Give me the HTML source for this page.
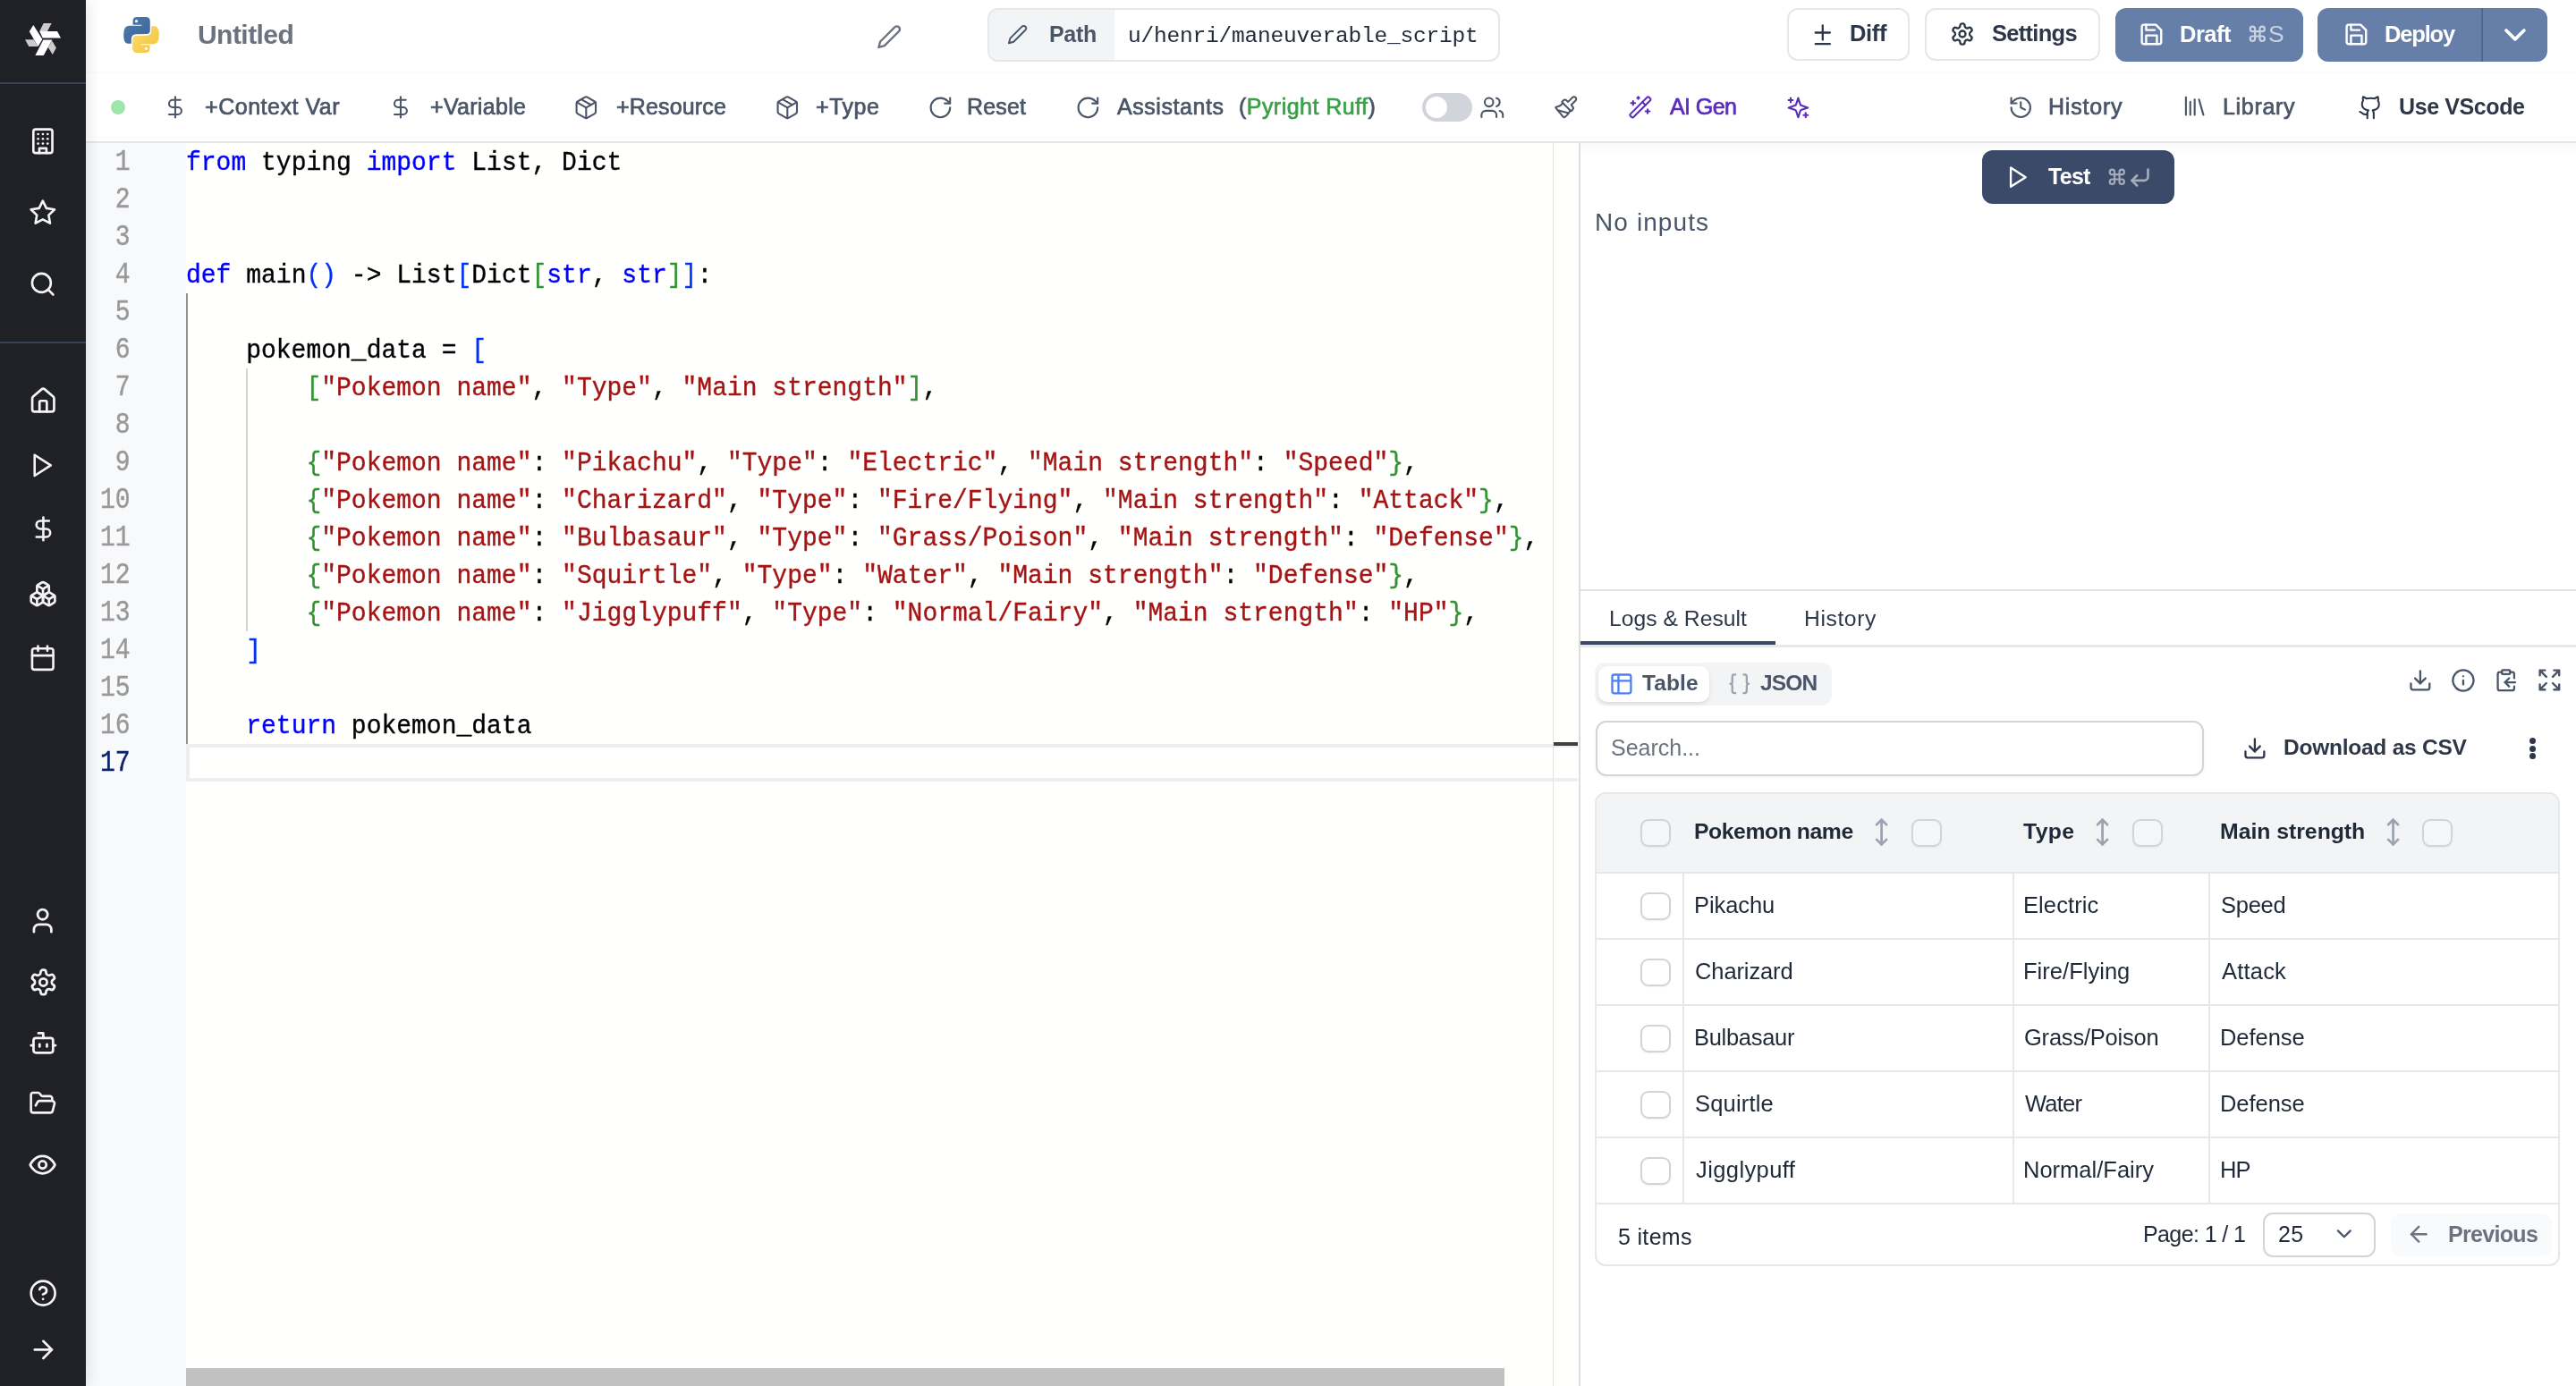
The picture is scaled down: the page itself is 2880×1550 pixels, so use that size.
<!DOCTYPE html>
<html><head><meta charset="utf-8"><title>Windmill</title>
<style>
html,body{margin:0;padding:0;}
body{width:2880px;height:1550px;overflow:hidden;position:relative;background:#ffffff;font-family:"Liberation Sans",sans-serif;}
.a{position:absolute;box-sizing:border-box;}
.t{position:absolute;white-space:pre;will-change:transform;}
.cl{height:42px;white-space:pre;transform:scaleY(1.05);transform-origin:0 28.5px;-webkit-text-stroke:0.35px currentColor;}
.ln{height:42px;text-align:right;transform:scaleY(1.18);transform-origin:0 28.5px;-webkit-text-stroke:0.4px currentColor;}
</style></head><body>
<!-- main backgrounds -->
<div class="a" style="left:96px;top:0;width:2784px;height:158px;background:#ffffff"></div>
<div class="a" style="left:96px;top:80px;width:2784px;height:2px;background:#fcfcfc"></div>
<div class="a" style="left:96px;top:158px;width:2784px;height:2px;background:#e4e6ea"></div>
<!-- editor -->
<div class="a" style="left:96px;top:160px;width:112px;height:1390px;background:#f8f9fb"></div>
<div class="a" style="left:208px;top:160px;width:1557px;height:1390px;background:#fffffe"></div>
<div class="a" style="will-change:transform;left:96px;top:161.5px;width:49.5px;font-family:'Liberation Mono',monospace;font-size:28px;line-height:42px;color:#999999">
<div class="ln">1</div>
<div class="ln">2</div>
<div class="ln">3</div>
<div class="ln">4</div>
<div class="ln">5</div>
<div class="ln">6</div>
<div class="ln">7</div>
<div class="ln">8</div>
<div class="ln">9</div>
<div class="ln">10</div>
<div class="ln">11</div>
<div class="ln">12</div>
<div class="ln">13</div>
<div class="ln">14</div>
<div class="ln">15</div>
<div class="ln">16</div>
<div class="ln" style="color:#0b216f">17</div>
</div>
<div class="a" style="left:208px;top:832px;width:1556px;height:42px;border:4px solid #eeeeee;border-right:none"></div>
<div class="a" style="left:208px;top:328px;width:2px;height:504px;background:#939393"></div>
<div class="a" style="left:275px;top:412px;width:2px;height:294px;background:#d3d3d3"></div>
<div class="a" style="will-change:transform;left:208px;top:161.5px;width:1528px;font-family:'Liberation Mono',monospace;font-size:28px;line-height:42px;color:#000000">
<div class="cl"><span style="color:#0000ff">from</span> typing <span style="color:#0000ff">import</span> List, Dict</div>
<div class="cl">&nbsp;</div>
<div class="cl">&nbsp;</div>
<div class="cl"><span style="color:#0000ff">def</span> main<span style="color:#0431fa">()</span> -&gt; List<span style="color:#0431fa">[</span>Dict<span style="color:#319331">[</span><span style="color:#0000ff">str</span>, <span style="color:#0000ff">str</span><span style="color:#319331">]</span><span style="color:#0431fa">]</span>:</div>
<div class="cl">&nbsp;</div>
<div class="cl">    pokemon_data = <span style="color:#0431fa">[</span></div>
<div class="cl">        <span style="color:#319331">[</span><span style="color:#a31515">&quot;Pokemon name&quot;</span>, <span style="color:#a31515">&quot;Type&quot;</span>, <span style="color:#a31515">&quot;Main strength&quot;</span><span style="color:#319331">]</span>,</div>
<div class="cl">&nbsp;</div>
<div class="cl">        <span style="color:#319331">{</span><span style="color:#a31515">&quot;Pokemon name&quot;</span>: <span style="color:#a31515">&quot;Pikachu&quot;</span>, <span style="color:#a31515">&quot;Type&quot;</span>: <span style="color:#a31515">&quot;Electric&quot;</span>, <span style="color:#a31515">&quot;Main strength&quot;</span>: <span style="color:#a31515">&quot;Speed&quot;</span><span style="color:#319331">}</span>,</div>
<div class="cl">        <span style="color:#319331">{</span><span style="color:#a31515">&quot;Pokemon name&quot;</span>: <span style="color:#a31515">&quot;Charizard&quot;</span>, <span style="color:#a31515">&quot;Type&quot;</span>: <span style="color:#a31515">&quot;Fire/Flying&quot;</span>, <span style="color:#a31515">&quot;Main strength&quot;</span>: <span style="color:#a31515">&quot;Attack&quot;</span><span style="color:#319331">}</span>,</div>
<div class="cl">        <span style="color:#319331">{</span><span style="color:#a31515">&quot;Pokemon name&quot;</span>: <span style="color:#a31515">&quot;Bulbasaur&quot;</span>, <span style="color:#a31515">&quot;Type&quot;</span>: <span style="color:#a31515">&quot;Grass/Poison&quot;</span>, <span style="color:#a31515">&quot;Main strength&quot;</span>: <span style="color:#a31515">&quot;Defense&quot;</span><span style="color:#319331">}</span>,</div>
<div class="cl">        <span style="color:#319331">{</span><span style="color:#a31515">&quot;Pokemon name&quot;</span>: <span style="color:#a31515">&quot;Squirtle&quot;</span>, <span style="color:#a31515">&quot;Type&quot;</span>: <span style="color:#a31515">&quot;Water&quot;</span>, <span style="color:#a31515">&quot;Main strength&quot;</span>: <span style="color:#a31515">&quot;Defense&quot;</span><span style="color:#319331">}</span>,</div>
<div class="cl">        <span style="color:#319331">{</span><span style="color:#a31515">&quot;Pokemon name&quot;</span>: <span style="color:#a31515">&quot;Jigglypuff&quot;</span>, <span style="color:#a31515">&quot;Type&quot;</span>: <span style="color:#a31515">&quot;Normal/Fairy&quot;</span>, <span style="color:#a31515">&quot;Main strength&quot;</span>: <span style="color:#a31515">&quot;HP&quot;</span><span style="color:#319331">}</span>,</div>
<div class="cl">    <span style="color:#0431fa">]</span></div>
<div class="cl">&nbsp;</div>
<div class="cl">    <span style="color:#0000ff">return</span> pokemon_data</div>
<div class="cl">&nbsp;</div>
</div>
<div class="a" style="left:1736px;top:160px;width:1px;height:1390px;background:#e2e2e2"></div>
<div class="a" style="left:1737px;top:830px;width:27px;height:4px;background:#404040"></div>
<div class="a" style="left:208px;top:1530px;width:1474px;height:20px;background:#c1c1c1"></div>
<div class="a" style="left:1765px;top:160px;width:2px;height:1390px;background:#dddddd"></div>
<!-- sidebar -->
<div class="a" style="left:0;top:0;width:96px;height:1550px;background:#202126;box-shadow:4px 0 14px rgba(0,0,0,0.085)"></div>
<div class="a" style="left:0;top:92px;width:96px;height:2px;background:#3a4353"></div>
<div class="a" style="left:0;top:382px;width:96px;height:2px;background:#3a4353"></div>
<svg class="a" style="left:20px;top:20px" width="56" height="48" viewBox="0 0 56 48">
 <polygon fill="#ffffff" points="17.3,8.0 27.4,23.9 22.5,31.9 12.8,15.2"/>
 <polygon fill="#cccccc" points="8.0,24.2 17.7,24.2 22.5,32.0 12.3,32.0"/>
 <polygon fill="#ffffff" points="24.2,14.9 44.0,14.9 48.0,22.5 27.7,22.5"/>
 <polygon fill="#cccccc" points="28.7,6.1 37.7,6.1 32.9,14.9 24.2,14.9"/>
 <polygon fill="#ffffff" points="28.4,24.6 38.4,24.6 28.7,41.9 19.4,41.9"/>
 <polygon fill="#cccccc" points="38.1,25.6 42.9,33.6 38.8,40.9 33.8,32.9"/>
</svg>
<!-- python logo -->
<svg class="a" style="left:134px;top:15px" width="48" height="48" viewBox="0 0 1386 1386">
 <defs>
  <linearGradient id="pb" x1="0" y1="0" x2="1" y2="1"><stop offset="0" stop-color="#4b7bb0"/><stop offset="1" stop-color="#3d6595"/></linearGradient>
  <linearGradient id="py" x1="0" y1="0" x2="1" y2="1"><stop offset="0" stop-color="#fade6e"/><stop offset="1" stop-color="#f2c33f"/></linearGradient>
 </defs>
 <path fill="url(#pb)" d="M420 370 L420 240 Q420 115 560 115 L840 115 Q975 115 975 250 L975 550 Q975 665 860 665 L520 670 Q375 680 370 820 L370 975 L250 975 Q120 960 120 690 Q120 400 300 400 L700 400 L700 370 Z"/>
 <circle cx="535" cy="250" r="45" fill="#ffffff"/>
 <path fill="url(#py)" d="M966 1016 L966 1146 Q966 1271 826 1271 L546 1271 Q411 1271 411 1136 L411 866 Q411 721 526 721 L866 716 Q1011 706 1016 566 L1016 411 L1136 411 Q1266 426 1266 696 Q1266 986 1086 986 L686 986 L686 1016 Z"/>
 <circle cx="851" cy="1136" r="45" fill="#ffffff"/>
</svg>
<!-- header boxes -->
<div class="a" style="left:1104px;top:9px;width:573px;height:60px;border:2px solid #e5e7eb;border-radius:12px;overflow:hidden;background:#fff">
 <div class="a" style="left:0;top:0;width:140px;height:56px;background:#f3f4f6"></div>
</div>
<div class="a" style="left:1998px;top:9px;width:137px;height:59px;border:2px solid #e5e7eb;border-radius:12px;background:#fff"></div>
<div class="a" style="left:2152px;top:9px;width:196px;height:59px;border:2px solid #e5e7eb;border-radius:12px;background:#fff"></div>
<div class="a" style="left:2365px;top:9px;width:210px;height:60px;background:#657fa8;border-radius:12px"></div>
<div class="a" style="left:2591px;top:9px;width:257px;height:60px;background:#657fa8;border-radius:12px"></div>
<div class="a" style="left:2774px;top:9px;width:2px;height:60px;background:#4f6893"></div>
<svg class="a" style="left:2512.6px;top:27.4px" width="21.6" height="21.6" viewBox="0 0 24 24" fill="none" stroke="#c9d2e2" stroke-width="2.4"><path d="M9 9V6A3 3 0 1 0 6 9H18A3 3 0 1 0 15 6V18A3 3 0 1 0 18 15H6A3 3 0 1 0 9 18Z"/></svg>
<!-- toolbar -->
<div class="a" style="left:124px;top:112px;width:16px;height:16px;border-radius:50%;background:#9ee6aa"></div>
<div class="a" style="left:1590px;top:104px;width:56px;height:32px;border-radius:16px;background:#d1d5db"></div>
<div class="a" style="left:1593.5px;top:107.5px;width:24.5px;height:24.5px;border-radius:50%;background:#ffffff"></div>
<!-- right panel -->
<div class="a" style="left:1767px;top:160px;width:1113px;height:1390px;background:#ffffff"></div>
<div class="a" style="left:1767px;top:160px;width:1113px;height:14px;background:linear-gradient(rgba(0,0,0,0.025),rgba(0,0,0,0))"></div>
<div class="a" style="left:2216px;top:168px;width:215px;height:60px;background:#3b4a68;border-radius:12px"></div>
<svg class="a" style="left:2355.5px;top:187.1px" width="21.6" height="21.6" viewBox="0 0 24 24" fill="none" stroke="#a3abbb" stroke-width="2.4"><path d="M9 9V6A3 3 0 1 0 6 9H18A3 3 0 1 0 15 6V18A3 3 0 1 0 18 15H6A3 3 0 1 0 9 18Z"/></svg>
<svg class="a" style="left:2379px;top:184.5px" width="27" height="27" viewBox="0 0 24 24" fill="none" stroke="#a3abbb" stroke-width="2.4" stroke-linecap="round" stroke-linejoin="round"><polyline points="9 10 4 15 9 20"/><path d="M20 4v7a4 4 0 0 1-4 4H4"/></svg>
<div class="a" style="left:1767px;top:659px;width:1113px;height:2px;background:#e2e2e2"></div>
<div class="a" style="left:1767px;top:721px;width:1113px;height:3px;background:#e5e7eb"></div>
<div class="a" style="left:1767px;top:717px;width:218px;height:4px;background:#3b4a64"></div>
<div class="a" style="left:1783px;top:741px;width:265px;height:48px;background:#f3f4f6;border-radius:11px"></div>
<div class="a" style="left:1787px;top:745px;width:124px;height:40px;background:#ffffff;border-radius:10px;box-shadow:0 2px 4px rgba(0,0,0,0.10)"></div>
<div class="a" style="left:1784px;top:806px;width:680px;height:62px;border:2px solid #d1d5db;border-radius:12px;background:#fff;box-shadow:0 1px 3px rgba(0,0,0,0.06)"></div>
<!-- table -->
<div class="a" style="left:1783px;top:886px;width:1079px;height:530px;border:2px solid #e5e7eb;border-radius:12px;overflow:hidden;background:#fff">
 <div class="a" style="left:0;top:0;width:1075px;height:89px;background:#f3f4f6;border-bottom:2px solid #e5e7eb"></div>
 <div class="a" style="left:0;top:161px;width:1075px;height:2px;background:#e5e7eb"></div>
 <div class="a" style="left:0;top:235px;width:1075px;height:2px;background:#e5e7eb"></div>
 <div class="a" style="left:0;top:309px;width:1075px;height:2px;background:#e5e7eb"></div>
 <div class="a" style="left:0;top:383px;width:1075px;height:2px;background:#e5e7eb"></div>
 <div class="a" style="left:0;top:457px;width:1075px;height:2px;background:#e5e7eb"></div>
 <div class="a" style="left:96px;top:89px;width:2px;height:370px;background:#e5e7eb"></div>
 <div class="a" style="left:464.5px;top:89px;width:2px;height:370px;background:#e5e7eb"></div>
 <div class="a" style="left:684px;top:89px;width:2px;height:370px;background:#e5e7eb"></div>
</div>
<div class="a" style="left:1834px;top:916px;width:34px;height:31px;border:2px solid #d1d5db;border-radius:9px;background:#f5f6f8;box-shadow:0 1px 2px rgba(0,0,0,0.06)"></div>
<div class="a" style="left:2137px;top:916px;width:34px;height:31px;border:2px solid #d1d5db;border-radius:9px;background:#f5f6f8;box-shadow:0 1px 2px rgba(0,0,0,0.06)"></div>
<div class="a" style="left:2384px;top:916px;width:34px;height:31px;border:2px solid #d1d5db;border-radius:9px;background:#f5f6f8;box-shadow:0 1px 2px rgba(0,0,0,0.06)"></div>
<div class="a" style="left:2708px;top:916px;width:34px;height:31px;border:2px solid #d1d5db;border-radius:9px;background:#f5f6f8;box-shadow:0 1px 2px rgba(0,0,0,0.06)"></div>
<div class="a" style="left:1834px;top:998px;width:34px;height:31px;border:2px solid #d1d5db;border-radius:9px;background:#fff;box-shadow:0 1px 2px rgba(0,0,0,0.06)"></div>
<div class="a" style="left:1834px;top:1072px;width:34px;height:31px;border:2px solid #d1d5db;border-radius:9px;background:#fff;box-shadow:0 1px 2px rgba(0,0,0,0.06)"></div>
<div class="a" style="left:1834px;top:1146px;width:34px;height:31px;border:2px solid #d1d5db;border-radius:9px;background:#fff;box-shadow:0 1px 2px rgba(0,0,0,0.06)"></div>
<div class="a" style="left:1834px;top:1220px;width:34px;height:31px;border:2px solid #d1d5db;border-radius:9px;background:#fff;box-shadow:0 1px 2px rgba(0,0,0,0.06)"></div>
<div class="a" style="left:1834px;top:1294px;width:34px;height:31px;border:2px solid #d1d5db;border-radius:9px;background:#fff;box-shadow:0 1px 2px rgba(0,0,0,0.06)"></div>
<div class="a" style="left:2530px;top:1356px;width:126px;height:50px;border:2px solid #d1d5db;border-radius:11px;background:#fff"></div>
<div class="a" style="left:2673px;top:1357px;width:180px;height:48px;background:#f9fafb;border-radius:11px"></div>
<div class="a" style="left:2827.5px;top:825px;width:7px;height:7px;border-radius:50%;background:#2d3748"></div>
<div class="a" style="left:2827.5px;top:833.5px;width:7px;height:7px;border-radius:50%;background:#2d3748"></div>
<div class="a" style="left:2827.5px;top:842px;width:7px;height:7px;border-radius:50%;background:#2d3748"></div>
<svg style="position:absolute;left:31.98px;top:141.93px;" width="31.85" height="31.85" viewBox="0 0 24 24" fill="none" stroke="#f4f4f5" stroke-width="2" stroke-linecap="round" stroke-linejoin="round"><rect width="16" height="20" x="4" y="2" rx="2" ry="2"/><path d="M9 22v-4h6v4"/><path d="M8 6h.01"/><path d="M16 6h.01"/><path d="M12 6h.01"/><path d="M12 10h.01"/><path d="M12 14h.01"/><path d="M16 10h.01"/><path d="M16 14h.01"/><path d="M8 10h.01"/><path d="M8 14h.01"/></svg>
<svg style="position:absolute;left:32.28px;top:222.09px;" width="31.64" height="31.64" viewBox="0 0 24 24" fill="none" stroke="#f4f4f5" stroke-width="2" stroke-linecap="round" stroke-linejoin="round"><polygon points="12 2 15.09 8.26 22 9.27 17 14.14 18.18 21.02 12 17.77 5.82 21.02 7 14.14 2 9.27 8.91 8.26 12 2"/></svg>
<svg style="position:absolute;left:32.46px;top:302.31px;" width="31.38" height="31.38" viewBox="0 0 24 24" fill="none" stroke="#f4f4f5" stroke-width="2" stroke-linecap="round" stroke-linejoin="round"><circle cx="11" cy="11" r="8"/><path d="m21 21-4.3-4.3"/></svg>
<svg style="position:absolute;left:31.83px;top:432.41px;" width="32.53" height="32.53" viewBox="0 0 24 24" fill="none" stroke="#f4f4f5" stroke-width="2" stroke-linecap="round" stroke-linejoin="round"><path d="M15 21v-8a1 1 0 0 0-1-1h-4a1 1 0 0 0-1 1v8"/><path d="M3 10a2 2 0 0 1 .709-1.528l7-5.999a2 2 0 0 1 2.582 0l7 5.999A2 2 0 0 1 21 10v9a2 2 0 0 1-2 2H5a2 2 0 0 1-2-2z"/></svg>
<svg style="position:absolute;left:31.06px;top:504.55px;" width="30.90" height="30.90" viewBox="0 0 24 24" fill="none" stroke="#f4f4f5" stroke-width="2" stroke-linecap="round" stroke-linejoin="round"><polygon points="6 3 20 12 6 21 6 3"/></svg>
<svg style="position:absolute;left:32.57px;top:576.42px;" width="30.86" height="30.86" viewBox="0 0 24 24" fill="none" stroke="#f4f4f5" stroke-width="2" stroke-linecap="round" stroke-linejoin="round"><line x1="12" x2="12" y1="2" y2="22"/><path d="M17 5H9.5a3.5 3.5 0 0 0 0 7h5a3.5 3.5 0 0 1 0 7H6"/></svg>
<svg style="position:absolute;left:31.95px;top:647.92px;" width="32.10" height="32.10" viewBox="0 0 24 24" fill="none" stroke="#f4f4f5" stroke-width="2" stroke-linecap="round" stroke-linejoin="round"><path d="M2.97 12.92A2 2 0 0 0 2 14.63v3.24a2 2 0 0 0 .97 1.71l3 1.8a2 2 0 0 0 2.06 0L12 19v-5.5l-5-3-4.03 2.42Z"/><path d="m7 16.5-4.74-2.85"/><path d="m7 16.5 5-3"/><path d="M7 16.5v5.17"/><path d="M12 13.5V19l3.97 2.38a2 2 0 0 0 2.06 0l3-1.8a2 2 0 0 0 .97-1.71v-3.24a2 2 0 0 0-.97-1.71L17 10.5l-5 3Z"/><path d="m17 16.5-5-3"/><path d="m17 16.5 4.74-2.85"/><path d="M17 16.5v5.17"/><path d="M7.970 4.42A2 2 0 0 0 7 6.13v4.37l5 3 5-3V6.13a2 2 0 0 0-.97-1.71l-3-1.8a2 2 0 0 0-2.06 0l-3 1.8Z"/><path d="M12 8 7.26 5.15"/><path d="m12 8 4.74-2.85"/><path d="M12 13.5V8"/></svg>
<svg style="position:absolute;left:32.26px;top:720.21px;" width="31.47" height="31.47" viewBox="0 0 24 24" fill="none" stroke="#f4f4f5" stroke-width="2" stroke-linecap="round" stroke-linejoin="round"><rect width="18" height="18" x="3" y="4" rx="2" ry="2"/><line x1="16" x2="16" y1="2" y2="6"/><line x1="8" x2="8" y1="2" y2="6"/><line x1="3" x2="21" y1="10" y2="10"/></svg>
<svg style="position:absolute;left:31.29px;top:1013.24px;" width="33.31" height="33.31" viewBox="0 0 24 24" fill="none" stroke="#f4f4f5" stroke-width="2" stroke-linecap="round" stroke-linejoin="round"><path d="M19 21v-2a4 4 0 0 0-4-4H9a4 4 0 0 0-4 4v2"/><circle cx="12" cy="7" r="4"/></svg>
<svg style="position:absolute;left:31.55px;top:1081.60px;" width="32.89" height="32.89" viewBox="0 0 24 24" fill="none" stroke="#f4f4f5" stroke-width="2" stroke-linecap="round" stroke-linejoin="round"><path d="M12.22 2h-.44a2 2 0 0 0-2 2v.18a2 2 0 0 1-1 1.73l-.43.25a2 2 0 0 1-2 0l-.15-.08a2 2 0 0 0-2.73.73l-.22.38a2 2 0 0 0 .73 2.73l.15.1a2 2 0 0 1 1 1.72v.51a2 2 0 0 1-1 1.74l-.15.09a2 2 0 0 0-.73 2.730l.22.38a2 2 0 0 0 2.73.73l.15-.08a2 2 0 0 1 2 0l.43.25a2 2 0 0 1 1 1.73V20a2 2 0 0 0 2 2h.44a2 2 0 0 0 2-2v-.18a2 2 0 0 1 1-1.73l.43-.25a2 2 0 0 1 2 0l.15.08a2 2 0 0 0 2.73-.73l.22-.39a2 2 0 0 0-.73-2.73l-.15-.08a2 2 0 0 1-1-1.74v-.5a2 2 0 0 1 1-1.74l.15-.09a2 2 0 0 0 .73-2.73l-.22-.38a2 2 0 0 0-2.73-.73l-.15.08a2 2 0 0 1-2 0l-.43-.25a2 2 0 0 1-1-1.73V4a2 2 0 0 0-2-2z"/><circle cx="12" cy="12" r="3"/></svg>
<svg style="position:absolute;left:31.62px;top:1149.92px;" width="32.76" height="32.76" viewBox="0 0 24 24" fill="none" stroke="#f4f4f5" stroke-width="2" stroke-linecap="round" stroke-linejoin="round"><path d="M12 8V4H8"/><rect width="16" height="12" x="4" y="8" rx="2"/><path d="M2 14h2"/><path d="M20 14h2"/><path d="M15 13v2"/><path d="M9 13v2"/></svg>
<svg style="position:absolute;left:31.70px;top:1218.15px;" width="31.61" height="31.61" viewBox="0 0 24 24" fill="none" stroke="#f4f4f5" stroke-width="2" stroke-linecap="round" stroke-linejoin="round"><path d="m6 14 1.5-2.9A2 2 0 0 1 9.24 10H20a2 2 0 0 1 1.94 2.5l-1.54 6a2 2 0 0 1-1.95 1.5H4a2 2 0 0 1-2-2V5a2 2 0 0 1 2-2h3.9a2 2 0 0 1 1.69.9l.81 1.2a2 2 0 0 0 1.67.9H18a2 2 0 0 1 2 2v2"/></svg>
<svg style="position:absolute;left:31.15px;top:1285.60px;" width="33.19" height="33.19" viewBox="0 0 24 24" fill="none" stroke="#f4f4f5" stroke-width="2" stroke-linecap="round" stroke-linejoin="round"><path d="M2 12s3-7 10-7 10 7 10 7-3 7-10 7-10-7-10-7Z"/><circle cx="12" cy="12" r="3"/></svg>
<svg style="position:absolute;left:31.75px;top:1429.95px;" width="32.29" height="32.29" viewBox="0 0 24 24" fill="none" stroke="#f4f4f5" stroke-width="2" stroke-linecap="round" stroke-linejoin="round"><circle cx="12" cy="12" r="10"/><path d="M9.09 9a3 3 0 0 1 5.83 1c0 2-3 3-3 3"/><path d="M12 17h.01"/></svg>
<svg style="position:absolute;left:31.61px;top:1493.46px;" width="32.78" height="32.78" viewBox="0 0 24 24" fill="none" stroke="#f4f4f5" stroke-width="2" stroke-linecap="round" stroke-linejoin="round"><path d="M5 12h14"/><path d="m12 5 7 7-7 7"/></svg>
<svg style="position:absolute;left:979.80px;top:26.83px;" width="28.33" height="28.33" viewBox="0 0 24 24" fill="none" stroke="#6b7280" stroke-width="2" stroke-linecap="round" stroke-linejoin="round"><path d="M17 3a2.85 2.83 0 1 1 4 4L7.5 20.5 2 22l1.5-5.5Z"/></svg>
<svg style="position:absolute;left:1125.90px;top:27.17px;" width="23.16" height="23.16" viewBox="0 0 24 24" fill="none" stroke="#4a5568" stroke-width="2" stroke-linecap="round" stroke-linejoin="round"><path d="M17 3a2.85 2.83 0 1 1 4 4L7.5 20.5 2 22l1.5-5.5Z"/></svg>
<svg style="position:absolute;left:2024.20px;top:24.95px;" width="27.60" height="27.60" viewBox="0 0 24 24" fill="none" stroke="#2d3748" stroke-width="2" stroke-linecap="round" stroke-linejoin="round"><path d="M12 3v14"/><path d="M5 10h14"/><path d="M5 21h14"/></svg>
<svg style="position:absolute;left:2179.98px;top:24.48px;" width="28.04" height="28.04" viewBox="0 0 24 24" fill="none" stroke="#2d3748" stroke-width="2" stroke-linecap="round" stroke-linejoin="round"><path d="M12.22 2h-.44a2 2 0 0 0-2 2v.18a2 2 0 0 1-1 1.73l-.43.25a2 2 0 0 1-2 0l-.15-.08a2 2 0 0 0-2.73.73l-.22.38a2 2 0 0 0 .73 2.73l.15.1a2 2 0 0 1 1 1.72v.51a2 2 0 0 1-1 1.74l-.15.09a2 2 0 0 0-.73 2.730l.22.38a2 2 0 0 0 2.73.73l.15-.08a2 2 0 0 1 2 0l.43.25a2 2 0 0 1 1 1.73V20a2 2 0 0 0 2 2h.44a2 2 0 0 0 2-2v-.18a2 2 0 0 1 1-1.73l.43-.25a2 2 0 0 1 2 0l.15.08a2 2 0 0 0 2.73-.73l.22-.39a2 2 0 0 0-.73-2.73l-.15-.08a2 2 0 0 1-1-1.74v-.5a2 2 0 0 1 1-1.74l.15-.09a2 2 0 0 0 .73-2.73l-.22-.38a2 2 0 0 0-2.73-.73l-.15.08a2 2 0 0 1-2 0l-.43-.25a2 2 0 0 1-1-1.73V4a2 2 0 0 0-2-2z"/><circle cx="12" cy="12" r="3"/></svg>
<svg style="position:absolute;left:2390.57px;top:24.32px;" width="28.86" height="28.86" viewBox="0 0 24 24" fill="none" stroke="#ffffff" stroke-width="2" stroke-linecap="round" stroke-linejoin="round"><path d="M19 21H5a2 2 0 0 1-2-2V5a2 2 0 0 1 2-2h11l5 5v11a2 2 0 0 1-2 2z"/><polyline points="17 21 17 13 7 13 7 21"/><polyline points="7 3 7 8 15 8"/></svg>
<svg style="position:absolute;left:2619.57px;top:24.32px;" width="28.86" height="28.86" viewBox="0 0 24 24" fill="none" stroke="#ffffff" stroke-width="2" stroke-linecap="round" stroke-linejoin="round"><path d="M19 21H5a2 2 0 0 1-2-2V5a2 2 0 0 1 2-2h11l5 5v11a2 2 0 0 1-2 2z"/><polyline points="17 21 17 13 7 13 7 21"/><polyline points="7 3 7 8 15 8"/></svg>
<svg style="position:absolute;left:2792.07px;top:19.07px;" width="39.86" height="39.86" viewBox="0 0 24 24" fill="none" stroke="#ffffff" stroke-width="2.2" stroke-linecap="round" stroke-linejoin="round"><path d="m6 9 6 6 6-6"/></svg>
<svg style="position:absolute;left:182.05px;top:106.05px;" width="27.90" height="27.90" viewBox="0 0 24 24" fill="none" stroke="#4a5568" stroke-width="1.75" stroke-linecap="round" stroke-linejoin="round"><line x1="12" x2="12" y1="2" y2="22"/><path d="M17 5H9.5a3.5 3.5 0 0 0 0 7h5a3.5 3.5 0 0 1 0 7H6"/></svg>
<svg style="position:absolute;left:434.05px;top:106.05px;" width="27.90" height="27.90" viewBox="0 0 24 24" fill="none" stroke="#4a5568" stroke-width="1.75" stroke-linecap="round" stroke-linejoin="round"><line x1="12" x2="12" y1="2" y2="22"/><path d="M17 5H9.5a3.5 3.5 0 0 0 0 7h5a3.5 3.5 0 0 1 0 7H6"/></svg>
<svg style="position:absolute;left:641.33px;top:105.68px;" width="28.64" height="28.64" viewBox="0 0 24 24" fill="none" stroke="#4a5568" stroke-width="1.75" stroke-linecap="round" stroke-linejoin="round"><path d="m7.5 4.27 9 5.15"/><path d="M21 8a2 2 0 0 0-1-1.73l-7-4a2 2 0 0 0-2 0l-7 4A2 2 0 0 0 3 8v8a2 2 0 0 0 1 1.73l7 4a2 2 0 0 0 2 0l7-4A2 2 0 0 0 21 16Z"/><path d="m3.3 7 8.7 5 8.7-5"/><path d="M12 22V12"/></svg>
<svg style="position:absolute;left:865.71px;top:105.71px;" width="28.58" height="28.58" viewBox="0 0 24 24" fill="none" stroke="#4a5568" stroke-width="1.75" stroke-linecap="round" stroke-linejoin="round"><path d="m7.5 4.27 9 5.15"/><path d="M21 8a2 2 0 0 0-1-1.73l-7-4a2 2 0 0 0-2 0l-7 4A2 2 0 0 0 3 8v8a2 2 0 0 0 1 1.73l7 4a2 2 0 0 0 2 0l7-4A2 2 0 0 0 21 16Z"/><path d="m3.3 7 8.7 5 8.7-5"/><path d="M12 22V12"/></svg>
<svg style="position:absolute;left:1036.60px;top:105.60px;" width="28.80" height="28.80" viewBox="0 0 24 24" fill="none" stroke="#4a5568" stroke-width="1.75" stroke-linecap="round" stroke-linejoin="round"><path d="M21 12a9 9 0 1 1-9-9c2.52 0 4.93 1 6.74 2.74L21 8"/><path d="M21 3v5h-5"/></svg>
<svg style="position:absolute;left:1201.60px;top:105.60px;" width="28.80" height="28.80" viewBox="0 0 24 24" fill="none" stroke="#4a5568" stroke-width="1.75" stroke-linecap="round" stroke-linejoin="round"><path d="M21 12a9 9 0 1 1-9-9c2.52 0 4.93 1 6.74 2.74L21 8"/><path d="M21 3v5h-5"/></svg>
<svg style="position:absolute;left:1653.71px;top:105.71px;" width="28.58" height="28.58" viewBox="0 0 24 24" fill="none" stroke="#4a5568" stroke-width="1.75" stroke-linecap="round" stroke-linejoin="round"><path d="M16 21v-2a4 4 0 0 0-4-4H6a4 4 0 0 0-4 4v2"/><circle cx="9" cy="7" r="4"/><path d="M22 21v-2a4 4 0 0 0-3-3.87"/><path d="M16 3.13a4 4 0 0 1 0 7.75"/></svg>
<svg style="position:absolute;left:1736.54px;top:105.77px;" width="27.52" height="27.52" viewBox="0 0 24 24" fill="none" stroke="#4a5568" stroke-width="1.75" stroke-linecap="round" stroke-linejoin="round"><path d="m14.622 17.897-10.68-2.913"/><path d="M18.376 2.622a1 1 0 1 1 3.002 3.002L17.36 9.643a.5.5 0 0 0 0 .707l.944.944a2.41 2.41 0 0 1 0 3.408l-.944.944a.5.5 0 0 1-.707 0L8.354 7.348a.5.5 0 0 1 0-.707l.944-.944a2.41 2.41 0 0 1 3.408 0l.944.944a.5.5 0 0 0 .707 0z"/><path d="M9 8c-1.804 2.71-3.97 3.46-6.583 3.948a.507.507 0 0 0-.302.819l7.32 8.883a1 1 0 0 0 1.185.204C12.735 20.405 16 16.792 16 15"/></svg>
<svg style="position:absolute;left:1819.84px;top:105.84px;" width="27.82" height="27.82" viewBox="0 0 24 24" fill="none" stroke="#5b2bbf" stroke-width="1.75" stroke-linecap="round" stroke-linejoin="round"><path d="m21.64 3.64-1.28-1.28a1.21 1.21 0 0 0-1.72 0L2.36 18.64a1.21 1.21 0 0 0 0 1.72l1.28 1.28a1.2 1.2 0 0 0 1.72 0L21.64 5.36a1.2 1.2 0 0 0 0-1.72"/><path d="m14 7 3 3"/><path d="M5 6v4"/><path d="M19 14v4"/><path d="M10 2v2"/><path d="M7 8H3"/><path d="M21 16h-4"/><path d="M11 3H9"/></svg>
<svg style="position:absolute;left:1995.60px;top:105.60px;" width="28.80" height="28.80" viewBox="0 0 24 24" fill="none" stroke="#5b2bbf" stroke-width="1.75" stroke-linecap="round" stroke-linejoin="round"><path d="m12 3-1.912 5.813a2 2 0 0 1-1.275 1.275L3 12l5.813 1.912a2 2 0 0 1 1.275 1.275L12 21l1.912-5.813a2 2 0 0 1 1.275-1.275L21 12l-5.813-1.912a2 2 0 0 1-1.275-1.275L12 3Z"/><path d="M5 3v4"/><path d="M19 17v4"/><path d="M3 5h4"/><path d="M17 19h4"/></svg>
<svg style="position:absolute;left:2244.50px;top:105.75px;" width="28.50" height="28.50" viewBox="0 0 24 24" fill="none" stroke="#4a5568" stroke-width="1.75" stroke-linecap="round" stroke-linejoin="round"><path d="M3 12a9 9 0 1 0 9-9 9.75 9.75 0 0 0-6.74 2.74L3 8"/><path d="M3 3v5h5"/><path d="M12 7v5l4 2"/></svg>
<svg style="position:absolute;left:2439.33px;top:104.33px;" width="29.33" height="29.33" viewBox="0 0 24 24" fill="none" stroke="#4a5568" stroke-width="1.75" stroke-linecap="round" stroke-linejoin="round"><path d="m16 6 4 14"/><path d="M12 6v14"/><path d="M8 8v12"/><path d="M4 4v16"/></svg>
<svg style="position:absolute;left:2635.90px;top:105.71px;" width="28.58" height="28.58" viewBox="0 0 24 24" fill="none" stroke="#2d3748" stroke-width="1.75" stroke-linecap="round" stroke-linejoin="round"><path d="M15 22v-4a4.8 4.8 0 0 0-1-3.5c3 0 6-2 6-5.5.08-1.25-.27-2.48-1-3.5.28-1.15.28-2.35 0-3.5 0 0-1 0-3 1.5-2.64-.5-5.36-.5-8 0C6 2 5 2 5 2c-.3 1.15-.3 2.35 0 3.5A5.403 5.403 0 0 0 4 9c0 3.5 3 5.5 6 5.5-.39.49-.68 1.05-.85 1.65-.17.6-.22 1.23-.15 1.850v4"/><path d="M9 18c-4.51 2-5-2-7-2"/></svg>
<svg style="position:absolute;left:2240.77px;top:183.80px;" width="28.40" height="28.40" viewBox="0 0 24 24" fill="none" stroke="#ffffff" stroke-width="2" stroke-linecap="round" stroke-linejoin="round"><polygon points="6 3 20 12 6 21 6 3"/></svg>
<svg style="position:absolute;left:1799.00px;top:750.55px;" width="27.90" height="27.90" viewBox="0 0 24 24" fill="none" stroke="#4f7ff2" stroke-width="2" stroke-linecap="round" stroke-linejoin="round"><path d="M9 3H5a2 2 0 0 0-2 2v4m6-6h10a2 2 0 0 1 2 2v4M9 3v18m0 0h10a2 2 0 0 0 2-2V9M9 21H5a2 2 0 0 1-2-2V9m0 0h18"/></svg>
<svg style="position:absolute;left:1930.70px;top:750.70px;" width="27.60" height="27.60" viewBox="0 0 24 24" fill="none" stroke="#9ca3af" stroke-width="2" stroke-linecap="round" stroke-linejoin="round"><path d="M8 3H7a2 2 0 0 0-2 2v5a2 2 0 0 1-2 2 2 2 0 0 1 2 2v5c0 1.1.9 2 2 2h1"/><path d="M16 21h1a2 2 0 0 0 2-2v-5c0-1.1.9-2 2-2a2 2 0 0 1-2-2V5a2 2 0 0 0-2-2h-1"/></svg>
<svg style="position:absolute;left:2691.86px;top:747.11px;" width="27.78" height="27.78" viewBox="0 0 24 24" fill="none" stroke="#4a5568" stroke-width="2" stroke-linecap="round" stroke-linejoin="round"><path d="M21 15v4a2 2 0 0 1-2 2H5a2 2 0 0 1-2-2v-4"/><polyline points="7 10 12 15 17 10"/><line x1="12" x2="12" y1="15" y2="3"/></svg>
<svg style="position:absolute;left:2739.86px;top:746.81px;" width="27.87" height="27.87" viewBox="0 0 24 24" fill="none" stroke="#4a5568" stroke-width="2" stroke-linecap="round" stroke-linejoin="round"><circle cx="12" cy="12" r="10"/><path d="M12 16v-4"/><path d="M12 8h.01"/></svg>
<svg style="position:absolute;left:2787.93px;top:747.01px;" width="27.49" height="27.49" viewBox="0 0 24 24" fill="none" stroke="#4a5568" stroke-width="2" stroke-linecap="round" stroke-linejoin="round"><rect width="8" height="4" x="8" y="2" rx="1" ry="1"/><path d="M8 4H6a2 2 0 0 0-2 2v14a2 2 0 0 0 2 2h12a2 2 0 0 0 2-2v-2"/><path d="M16 4h2a2 2 0 0 1 2 2v4"/><path d="M21 14H11"/><path d="m15 10-4 4 4 4"/></svg>
<svg style="position:absolute;left:2835.60px;top:746.10px;" width="28.80" height="28.80" viewBox="0 0 24 24" fill="none" stroke="#4a5568" stroke-width="2" stroke-linecap="round" stroke-linejoin="round"><path d="m21 21-6-6m6 6v-4.8m0 4.8h-4.8"/><path d="M3 16.2V21m0 0h4.8M3 21l6-6"/><path d="M21 7.8V3m0 0h-4.8M21 3l-6 6"/><path d="M3 7.8V3m0 0h4.8M3 3l6 6"/></svg>
<svg style="position:absolute;left:2507.08px;top:822.88px;" width="27.84" height="27.84" viewBox="0 0 24 24" fill="none" stroke="#2d3748" stroke-width="2" stroke-linecap="round" stroke-linejoin="round"><path d="M21 15v4a2 2 0 0 1-2 2H5a2 2 0 0 1-2-2v-4"/><polyline points="7 10 12 15 17 10"/><line x1="12" x2="12" y1="15" y2="3"/></svg>
<svg style="position:absolute;left:2087.42px;top:914.42px;" width="33.16" height="33.16" viewBox="0 0 24 24" fill="none" stroke="#9ca3af" stroke-width="2" stroke-linecap="round" stroke-linejoin="round"><polyline points="8 18 12 22 16 18"/><polyline points="8 6 12 2 16 6"/><line x1="12" x2="12" y1="2" y2="22"/></svg>
<svg style="position:absolute;left:2334.42px;top:914.42px;" width="33.16" height="33.16" viewBox="0 0 24 24" fill="none" stroke="#9ca3af" stroke-width="2" stroke-linecap="round" stroke-linejoin="round"><polyline points="8 18 12 22 16 18"/><polyline points="8 6 12 2 16 6"/><line x1="12" x2="12" y1="2" y2="22"/></svg>
<svg style="position:absolute;left:2659.42px;top:914.42px;" width="33.16" height="33.16" viewBox="0 0 24 24" fill="none" stroke="#9ca3af" stroke-width="2" stroke-linecap="round" stroke-linejoin="round"><polyline points="8 18 12 22 16 18"/><polyline points="8 6 12 2 16 6"/><line x1="12" x2="12" y1="2" y2="22"/></svg>
<svg style="position:absolute;left:2607.43px;top:1365.68px;" width="27.64" height="27.64" viewBox="0 0 24 24" fill="none" stroke="#4a5568" stroke-width="2" stroke-linecap="round" stroke-linejoin="round"><path d="m6 9 6 6 6-6"/></svg>
<svg style="position:absolute;left:2690.25px;top:1366.25px;" width="28.50" height="28.50" viewBox="0 0 24 24" fill="none" stroke="#6b7280" stroke-width="2" stroke-linecap="round" stroke-linejoin="round"><path d="m12 19-7-7 7-7"/><path d="M19 12H5"/></svg>
<div class="t" style="left:220.50px;top:24.10px;font-family:'Liberation Sans', sans-serif;font-size:30px;line-height:30px;font-weight:bold;color:#6b7280;letter-spacing:-0.546px;">Untitled</div>
<div class="t" style="left:1173.00px;top:25.84px;font-family:'Liberation Sans', sans-serif;font-size:25px;line-height:25px;font-weight:bold;color:#4a5568;letter-spacing:-0.301px;">Path</div>
<div class="t" style="left:1261.00px;top:28.52px;font-family:'Liberation Mono', monospace;font-size:24.5px;line-height:24.5px;font-weight:normal;color:#1f2937;letter-spacing:-0.202px;">u/henri/maneuverable_script</div>
<div class="t" style="left:2068.00px;top:25.41px;font-family:'Liberation Sans', sans-serif;font-size:25.5px;line-height:25.5px;font-weight:bold;color:#2d3748;letter-spacing:-0.331px;">Diff</div>
<div class="t" style="left:2227.00px;top:25.41px;font-family:'Liberation Sans', sans-serif;font-size:25.5px;line-height:25.5px;font-weight:bold;color:#2d3748;letter-spacing:-0.716px;">Settings</div>
<div class="t" style="left:2437.00px;top:25.71px;font-family:'Liberation Sans', sans-serif;font-size:25.5px;line-height:25.5px;font-weight:bold;color:#ffffff;letter-spacing:-0.503px;">Draft</div>
<div class="t" style="left:2536.00px;top:25.17px;font-family:'Liberation Sans', sans-serif;font-size:26.5px;line-height:26.5px;font-weight:normal;color:#c9d2e2;letter-spacing:0.000px;">S</div>
<div class="t" style="left:2666.00px;top:25.71px;font-family:'Liberation Sans', sans-serif;font-size:25.5px;line-height:25.5px;font-weight:bold;color:#ffffff;letter-spacing:-1.167px;">Deploy</div>
<div class="t" style="left:228.70px;top:106.84px;font-family:'Liberation Sans', sans-serif;font-size:25px;line-height:25px;font-weight:normal;color:#4a5568;letter-spacing:0.534px;-webkit-text-stroke:0.7px currentColor;">+Context Var</div>
<div class="t" style="left:481.00px;top:106.84px;font-family:'Liberation Sans', sans-serif;font-size:25px;line-height:25px;font-weight:normal;color:#4a5568;letter-spacing:0.305px;-webkit-text-stroke:0.7px currentColor;">+Variable</div>
<div class="t" style="left:689.00px;top:106.84px;font-family:'Liberation Sans', sans-serif;font-size:25px;line-height:25px;font-weight:normal;color:#4a5568;letter-spacing:0.164px;-webkit-text-stroke:0.7px currentColor;">+Resource</div>
<div class="t" style="left:912.00px;top:106.84px;font-family:'Liberation Sans', sans-serif;font-size:25px;line-height:25px;font-weight:normal;color:#4a5568;letter-spacing:0.526px;-webkit-text-stroke:0.7px currentColor;">+Type</div>
<div class="t" style="left:1081.40px;top:106.84px;font-family:'Liberation Sans', sans-serif;font-size:25px;line-height:25px;font-weight:normal;color:#4a5568;letter-spacing:0.185px;-webkit-text-stroke:0.7px currentColor;">Reset</div>
<div class="t" style="left:1248.60px;top:106.84px;font-family:'Liberation Sans', sans-serif;font-size:25px;line-height:25px;font-weight:normal;color:#4a5568;letter-spacing:0.552px;-webkit-text-stroke:0.7px currentColor;">Assistants</div>
<div class="t" style="left:1384.60px;top:106.84px;font-family:'Liberation Sans', sans-serif;font-size:25px;line-height:25px;font-weight:normal;color:#4a5568;letter-spacing:0.456px;-webkit-text-stroke:0.7px currentColor;">(<span style="color:#3e9f4a">Pyright Ruff</span>)</div>
<div class="t" style="left:1867.00px;top:106.84px;font-family:'Liberation Sans', sans-serif;font-size:25px;line-height:25px;font-weight:normal;color:#5b2bbf;letter-spacing:-0.583px;-webkit-text-stroke:0.7px currentColor;">AI Gen</div>
<div class="t" style="left:2290.00px;top:106.84px;font-family:'Liberation Sans', sans-serif;font-size:25px;line-height:25px;font-weight:normal;color:#4a5568;letter-spacing:0.786px;-webkit-text-stroke:0.7px currentColor;">History</div>
<div class="t" style="left:2485.00px;top:106.84px;font-family:'Liberation Sans', sans-serif;font-size:25px;line-height:25px;font-weight:normal;color:#4a5568;letter-spacing:0.681px;-webkit-text-stroke:0.7px currentColor;">Library</div>
<div class="t" style="left:2682.00px;top:106.84px;font-family:'Liberation Sans', sans-serif;font-size:25px;line-height:25px;font-weight:bold;color:#2d3748;letter-spacing:-0.400px;">Use VScode</div>
<div class="t" style="left:2289.50px;top:185.34px;font-family:'Liberation Sans', sans-serif;font-size:25px;line-height:25px;font-weight:bold;color:#ffffff;letter-spacing:-0.708px;">Test</div>
<div class="t" style="left:1782.50px;top:234.50px;font-family:'Liberation Sans', sans-serif;font-size:28px;line-height:28px;font-weight:normal;color:#4a5568;letter-spacing:1.101px;">No inputs</div>
<div class="t" style="left:1798.50px;top:680.09px;font-family:'Liberation Sans', sans-serif;font-size:24.7px;line-height:24.7px;font-weight:normal;color:#2d3748;letter-spacing:0.022px;">Logs &amp; Result</div>
<div class="t" style="left:2016.50px;top:680.09px;font-family:'Liberation Sans', sans-serif;font-size:24.7px;line-height:24.7px;font-weight:normal;color:#2d3748;letter-spacing:0.589px;">History</div>
<div class="t" style="left:1836.00px;top:752.06px;font-family:'Liberation Sans', sans-serif;font-size:24.5px;line-height:24.5px;font-weight:bold;color:#4a5568;letter-spacing:0.114px;">Table</div>
<div class="t" style="left:1967.50px;top:752.06px;font-family:'Liberation Sans', sans-serif;font-size:24.5px;line-height:24.5px;font-weight:bold;color:#4a5568;letter-spacing:-0.841px;">JSON</div>
<div class="t" style="left:1801.00px;top:824.44px;font-family:'Liberation Sans', sans-serif;font-size:25px;line-height:25px;font-weight:normal;color:#6b7280;letter-spacing:-0.013px;">Search...</div>
<div class="t" style="left:2553.00px;top:824.26px;font-family:'Liberation Sans', sans-serif;font-size:24.5px;line-height:24.5px;font-weight:bold;color:#2d3748;letter-spacing:-0.246px;">Download as CSV</div>
<div class="t" style="left:1894.00px;top:917.76px;font-family:'Liberation Sans', sans-serif;font-size:24.8px;line-height:24.8px;font-weight:bold;color:#1f2937;letter-spacing:-0.462px;">Pokemon name</div>
<div class="t" style="left:2262.30px;top:917.76px;font-family:'Liberation Sans', sans-serif;font-size:24.8px;line-height:24.8px;font-weight:bold;color:#1f2937;letter-spacing:0.352px;">Type</div>
<div class="t" style="left:2481.60px;top:917.76px;font-family:'Liberation Sans', sans-serif;font-size:24.8px;line-height:24.8px;font-weight:bold;color:#1f2937;letter-spacing:-0.026px;">Main strength</div>
<div class="t" style="left:1894.00px;top:1000.41px;font-family:'Liberation Sans', sans-serif;font-size:25.5px;line-height:25.5px;font-weight:normal;color:#1f2937;letter-spacing:-0.090px;">Pikachu</div>
<div class="t" style="left:2261.50px;top:1000.41px;font-family:'Liberation Sans', sans-serif;font-size:25.5px;line-height:25.5px;font-weight:normal;color:#1f2937;letter-spacing:0.093px;">Electric</div>
<div class="t" style="left:2482.50px;top:1000.41px;font-family:'Liberation Sans', sans-serif;font-size:25.5px;line-height:25.5px;font-weight:normal;color:#1f2937;letter-spacing:-0.263px;">Speed</div>
<div class="t" style="left:1895.00px;top:1074.41px;font-family:'Liberation Sans', sans-serif;font-size:25.5px;line-height:25.5px;font-weight:normal;color:#1f2937;letter-spacing:-0.107px;">Charizard</div>
<div class="t" style="left:2261.50px;top:1074.41px;font-family:'Liberation Sans', sans-serif;font-size:25.5px;line-height:25.5px;font-weight:normal;color:#1f2937;letter-spacing:0.026px;">Fire/Flying</div>
<div class="t" style="left:2483.50px;top:1074.41px;font-family:'Liberation Sans', sans-serif;font-size:25.5px;line-height:25.5px;font-weight:normal;color:#1f2937;letter-spacing:0.198px;">Attack</div>
<div class="t" style="left:1894.00px;top:1148.41px;font-family:'Liberation Sans', sans-serif;font-size:25.5px;line-height:25.5px;font-weight:normal;color:#1f2937;letter-spacing:-0.292px;">Bulbasaur</div>
<div class="t" style="left:2262.50px;top:1148.41px;font-family:'Liberation Sans', sans-serif;font-size:25.5px;line-height:25.5px;font-weight:normal;color:#1f2937;letter-spacing:-0.216px;">Grass/Poison</div>
<div class="t" style="left:2481.50px;top:1148.41px;font-family:'Liberation Sans', sans-serif;font-size:25.5px;line-height:25.5px;font-weight:normal;color:#1f2937;letter-spacing:-0.049px;">Defense</div>
<div class="t" style="left:1895.00px;top:1222.41px;font-family:'Liberation Sans', sans-serif;font-size:25.5px;line-height:25.5px;font-weight:normal;color:#1f2937;letter-spacing:0.189px;">Squirtle</div>
<div class="t" style="left:2263.50px;top:1222.41px;font-family:'Liberation Sans', sans-serif;font-size:25.5px;line-height:25.5px;font-weight:normal;color:#1f2937;letter-spacing:-0.768px;">Water</div>
<div class="t" style="left:2481.50px;top:1222.41px;font-family:'Liberation Sans', sans-serif;font-size:25.5px;line-height:25.5px;font-weight:normal;color:#1f2937;letter-spacing:-0.049px;">Defense</div>
<div class="t" style="left:1896.00px;top:1296.41px;font-family:'Liberation Sans', sans-serif;font-size:25.5px;line-height:25.5px;font-weight:normal;color:#1f2937;letter-spacing:0.402px;">Jigglypuff</div>
<div class="t" style="left:2261.50px;top:1296.41px;font-family:'Liberation Sans', sans-serif;font-size:25.5px;line-height:25.5px;font-weight:normal;color:#1f2937;letter-spacing:0.011px;">Normal/Fairy</div>
<div class="t" style="left:2481.50px;top:1296.41px;font-family:'Liberation Sans', sans-serif;font-size:25.5px;line-height:25.5px;font-weight:normal;color:#1f2937;letter-spacing:-0.915px;">HP</div>
<div class="t" style="left:1809.40px;top:1370.64px;font-family:'Liberation Sans', sans-serif;font-size:25px;line-height:25px;font-weight:normal;color:#1f2937;letter-spacing:0.320px;">5 items</div>
<div class="t" style="left:2396.40px;top:1367.84px;font-family:'Liberation Sans', sans-serif;font-size:25px;line-height:25px;font-weight:normal;color:#1f2937;letter-spacing:-0.602px;">Page: 1 / 1</div>
<div class="t" style="left:2546.70px;top:1367.84px;font-family:'Liberation Sans', sans-serif;font-size:25px;line-height:25px;font-weight:normal;color:#1f2937;letter-spacing:0.396px;">25</div>
<div class="t" style="left:2736.50px;top:1367.84px;font-family:'Liberation Sans', sans-serif;font-size:25px;line-height:25px;font-weight:bold;color:#6b7280;letter-spacing:-0.686px;">Previous</div>
</body></html>
